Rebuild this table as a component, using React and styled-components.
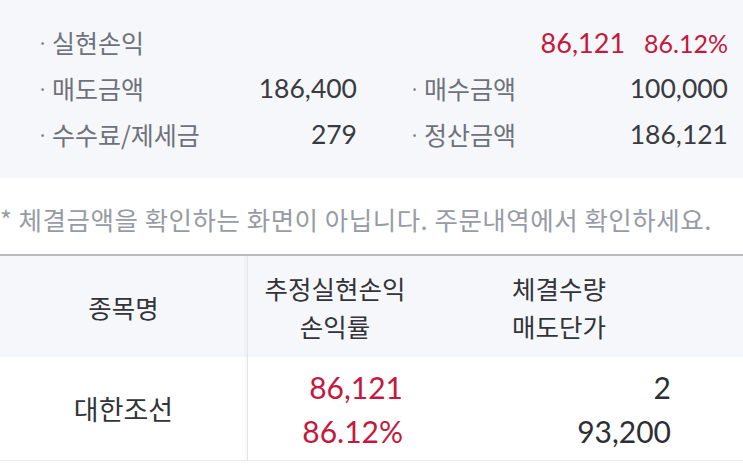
import React from 'react';
import styled, { createGlobalStyle } from 'styled-components';

const Global = createGlobalStyle`
  body {
    margin: 0;
    background: #fff;
    font-family: "Lato", "Noto Sans CJK KR", sans-serif;
  }
`;

const Page = styled.div`
  width: 743px;
  height: 466px;
  overflow: hidden;
`;

const Summary = styled.div`
  background: #f6f7fa;
  height: 178px;
  box-sizing: border-box;
  padding: 19px 15px 0 37px;
  display: grid;
  grid-template-columns: 320px 319px;
  grid-auto-rows: 46px;
  column-gap: 52px;
`;

const Item = styled.div`
  display: flex;
  align-items: center;
  justify-content: space-between;
`;

const Label = styled.span`
  display: flex;
  align-items: center;
  color: #6e727a;
  font-family: "Noto Sans CJK KR", sans-serif;
  font-size: 25px;
  &::before {
    content: '·';
    width: 15px;
    font-size: 20px;
    color: #7d818a;
  }
`;

const Amount = styled.span`
  font-family: "Lato", sans-serif;
  font-size: ${p => (p.$red ? '27px' : '26.5px')};
  color: ${p => (p.$red ? '#c4193d' : '#3a3b3f')};
`;

const Percent = styled.span`
  font-family: "Lato", sans-serif;
  font-size: 25px;
  color: #c4193d;
  margin-left: 19px;
`;

const RedGroup = styled.div`
  margin-left: auto;
  display: flex;
  align-items: baseline;
`;

const Note = styled.p`
  margin: 0;
  height: 76px;
  display: flex;
  align-items: center;
  padding-top: 4px;
  box-sizing: border-box;
  color: #979ba4;
  font-family: "Noto Sans CJK KR", sans-serif;
  font-size: 25.5px;
  letter-spacing: 0.5px;
  white-space: nowrap;
`;

const Table = styled.div`
  border-top: 2px solid #b9babd;
  border-bottom: 1px solid #e9eaec;
  display: grid;
  grid-template-columns: 248px 174px 274px 1fr;
`;

const Cell = styled.div`
  background: ${p => (p.$head ? '#f6f7fa' : '#fff')};
  height: ${p => (p.$head ? '101px' : '103px')};
  display: flex;
  flex-direction: column;
  justify-content: center;
  align-items: ${p => p.$align || 'center'};
  padding: ${p => p.$pad || '0'};
  box-sizing: border-box;
  ${p => p.$divider && `
    border-right: 1px solid #e4e5e8;
    box-shadow: inset -4px 0 4px -3px rgba(0,0,0,0.04);
  `}
`;

const HeadText = styled.span`
  font-family: "Noto Sans CJK KR", sans-serif;
  font-size: 25.5px;
  color: #333438;
  line-height: 38px;
`;

const BodyText = styled.span`
  font-family: "Noto Sans CJK KR", sans-serif;
  font-size: 27px;
  color: #333438;
`;

const Value = styled.span`
  font-family: "Lato", sans-serif;
  font-size: 30px;
  line-height: 44px;
  color: ${p => (p.$red ? '#c4193d' : '#2e2f33')};
`;

const rows = [
  [{ label: '매도금액', value: '186,400' }, { label: '매수금액', value: '100,000' }],
  [{ label: '수수료/제세금', value: '279' }, { label: '정산금액', value: '186,121' }],
];

export default function App() {
  return (
    <Page>
      <Global />
      <Summary>
        <Item>
          <Label>실현손익</Label>
        </Item>
        <Item>
          <RedGroup>
            <Amount $red>86,121</Amount>
            <Percent>86.12%</Percent>
          </RedGroup>
        </Item>
        {rows.flat().map(r => (
          <Item key={r.label}>
            <Label>{r.label}</Label>
            <Amount>{r.value}</Amount>
          </Item>
        ))}
      </Summary>
      <Note>* 체결금액을 확인하는 화면이 아닙니다. 주문내역에서 확인하세요.</Note>
      <Table>
        <Cell $head $divider>
          <HeadText>종목명</HeadText>
        </Cell>
        <Cell $head>
          <HeadText>추정실현손익</HeadText>
          <HeadText>손익률</HeadText>
        </Cell>
        <Cell $head>
          <HeadText>체결수량</HeadText>
          <HeadText>매도단가</HeadText>
        </Cell>
        <Cell $head />
        <Cell $divider>
          <BodyText>대한조선</BodyText>
        </Cell>
        <Cell $align="flex-end" $pad="0 19px 0 0">
          <Value $red>86,121</Value>
          <Value $red>86.12%</Value>
        </Cell>
        <Cell $align="flex-end" $pad="0 25px 0 0">
          <Value>2</Value>
          <Value>93,200</Value>
        </Cell>
        <Cell />
      </Table>
    </Page>
  );
}
